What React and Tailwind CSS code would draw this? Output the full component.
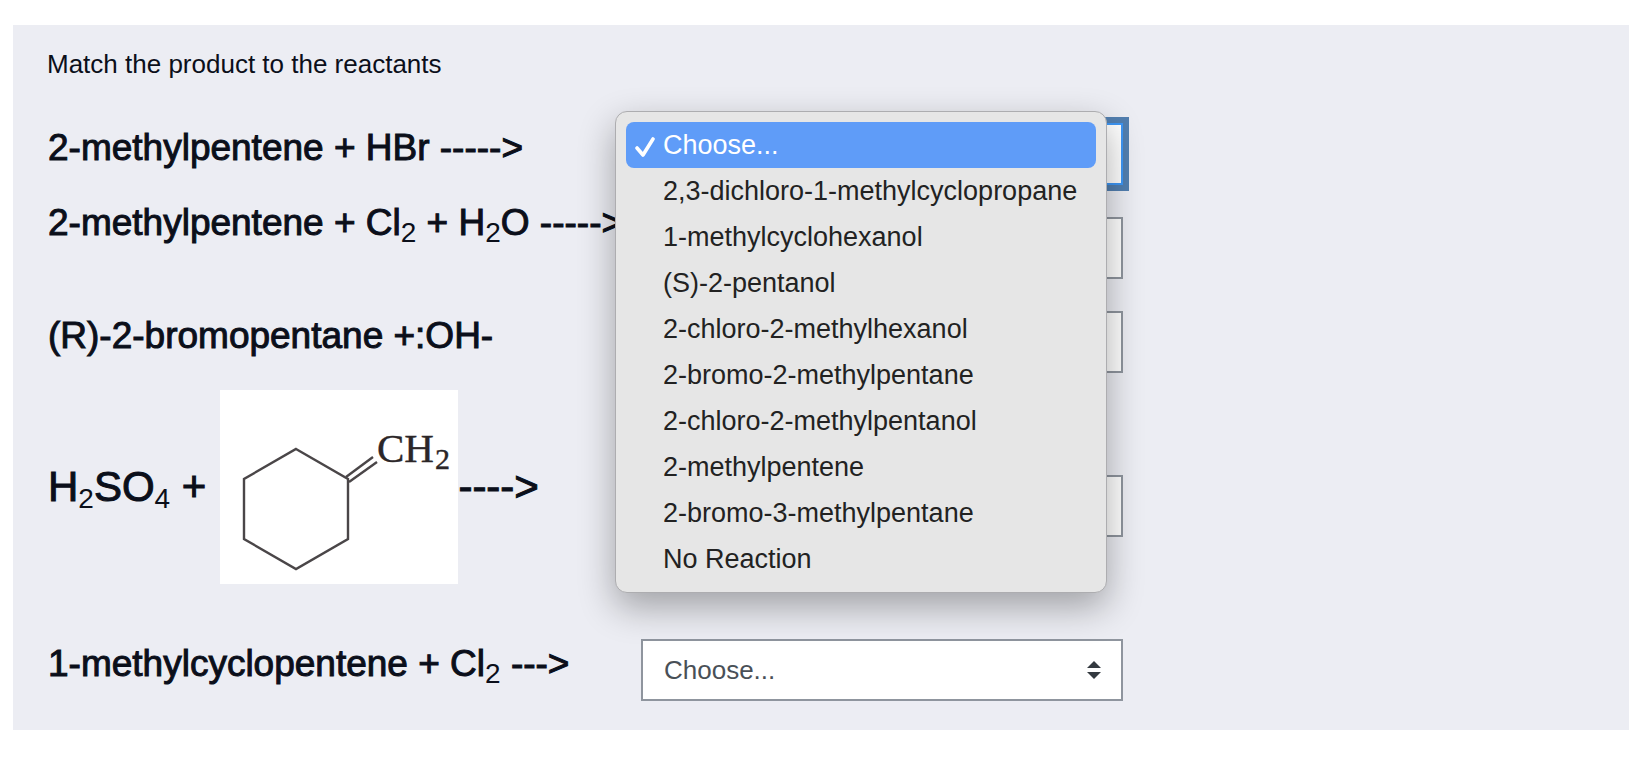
import React, { useState } from 'react';

const OPTIONS = [
    'Choose...',
    '2,3-dichloro-1-methylcyclopropane',
    '1-methylcyclohexanol',
    '(S)-2-pentanol',
    '2-chloro-2-methylhexanol',
    '2-bromo-2-methylpentane',
    '2-chloro-2-methylpentanol',
    '2-methylpentene',
    '2-bromo-3-methylpentane',
    'No Reaction',
];

// Methylenecyclohexane structure
function Methylenecyclohexane() {
    return (
        <svg viewBox="0 0 238 194" className="w-[238px] h-[194px] shrink-0 bg-white" role="img" aria-label="Methylenecyclohexane">
            <g fill="none" stroke="#4a4648" strokeWidth="2.4">
                <path d="M76 59 L128 89 V149 L76 179 L24 149 V89 Z" />
                <path d="M126 87 L153 67" />
                <path d="M129 92 L157 72" />
            </g>
            <g fill="#2b2628" stroke="#2b2628" strokeWidth="0.4" fontFamily="'Liberation Serif', serif">
                <text x="157" y="72" fontSize="41">CH</text>
                <text x="215" y="79" fontSize="30">2</text>
            </g>
        </svg>
    );
}

function Sub({ children }) {
    return <sub className="text-[28px] [-webkit-text-stroke:0px]">{children}</sub>;
}

function AnswerSelect({ id, value, onChange, active }) {
    return (
        <div className="relative w-full">
            <select
                id={id}
                value={value}
                onChange={(e) => onChange(e.target.value)}
                className={`block w-full h-[62px] appearance-none border-2 bg-white pl-[21px] pr-16 text-[26px] text-[#495057] outline-none ${
                    active ? 'border-[#3d96f5] ring-[6px] ring-[#527fb0]' : 'border-[#8f959e]'
                }`}
            >
                {OPTIONS.map((option) => (
                    <option key={option}>{option}</option>
                ))}
            </select>
            <svg viewBox="0 0 14 18" className="pointer-events-none absolute right-[22px] top-[22px] h-[18px] w-[14px]" fill="#343a40">
                <path d="M7 0 L14 7 H0 Z" />
                <path d="M0 11 H14 L7 18 Z" />
            </svg>
        </div>
    );
}

function OptionMenu({ value, onPick }) {
    return (
        <ul
            role="listbox"
            aria-label="Products"
            className="absolute -left-[26px] -top-3 z-10 w-[492px] rounded-xl border border-[#adadb0] bg-[#e6e6e6] p-[10px] shadow-[0_14px_36px_rgba(0,0,0,0.32)]"
        >
            {OPTIONS.map((option) => {
                const selected = option === value;
                return (
                    <li
                        key={option}
                        role="option"
                        aria-selected={selected}
                        onClick={() => onPick(option)}
                        className={`flex h-[46px] items-center rounded-lg text-[27px] ${
                            selected ? 'bg-[#5f9cf8] text-white' : 'text-[#222222]'
                        }`}
                    >
                        <span className="flex w-[37px] shrink-0 justify-center">
                            {selected && (
                                <svg viewBox="0 0 20 20" className="mt-1 h-5 w-5" fill="none" stroke="currentColor" strokeWidth="3.6" strokeLinecap="round" strokeLinejoin="round">
                                    <path d="M2 11 L8 18 L18 2" />
                                </svg>
                            )}
                        </span>
                        {option}
                    </li>
                );
            })}
        </ul>
    );
}

const QUESTIONS = [
    { id: 'q1', pad: 'pb-3', text: <>2-methylpentene + HBr -----&gt;</> },
    { id: 'q2', pad: 'pb-[50px]', text: <>2-methylpentene + Cl<Sub>2</Sub> + H<Sub>2</Sub>O -----&gt;</> },
    { id: 'q3', pad: 'pb-3', text: <>(R)-2-bromopentane +:OH-</> },
    {
        id: 'q4',
        pad: 'pt-[6px] pb-[44px]',
        text: (
            <span className="flex items-center text-[42px]">
                <span className="mr-[14px]">H<Sub>2</Sub>SO<Sub>4</Sub> +</span>
                <Methylenecyclohexane />
                <span>----&gt;</span>
            </span>
        ),
    },
    { id: 'q5', pad: 'pb-3', text: <>1-methylcyclopentene + Cl<Sub>2</Sub> ---&gt;</> },
];

export default function App() {
    const [answers, setAnswers] = useState({});
    const [openId, setOpenId] = useState('q1');

    const pick = (id, value) => {
        setAnswers({ ...answers, [id]: value });
        setOpenId(null);
    };

    return (
        <div className="bg-white pt-[25px] pr-[23px] pb-8 pl-[13px] font-['Liberation_Sans',Arial,sans-serif]">
            <main className="bg-[#ecedf3] px-[34px] pt-5 pb-[27px] text-[#0b0f1a]">
                <p className="mb-[37px] text-[26px] leading-[39px]">Match the product to the reactants</p>

                <div className="flex flex-col gap-[9px]">
                    {QUESTIONS.map(({ id, pad, text }) => (
                        <div key={id} className="flex items-center">
                            <label
                                htmlFor={id}
                                className={`w-[594px] shrink-0 whitespace-nowrap pl-px text-[37px] leading-[54px] [-webkit-text-stroke:1px_#0b0f1a] ${pad}`}
                            >
                                {text}
                            </label>
                            <div className="relative w-full max-w-[482px]">
                                <AnswerSelect
                                    id={id}
                                    value={answers[id] || OPTIONS[0]}
                                    onChange={(value) => pick(id, value)}
                                    active={openId === id}
                                />
                                {openId === id && (
                                    <OptionMenu value={answers[id] || OPTIONS[0]} onPick={(value) => pick(id, value)} />
                                )}
                            </div>
                        </div>
                    ))}
                </div>
            </main>
        </div>
    );
}
